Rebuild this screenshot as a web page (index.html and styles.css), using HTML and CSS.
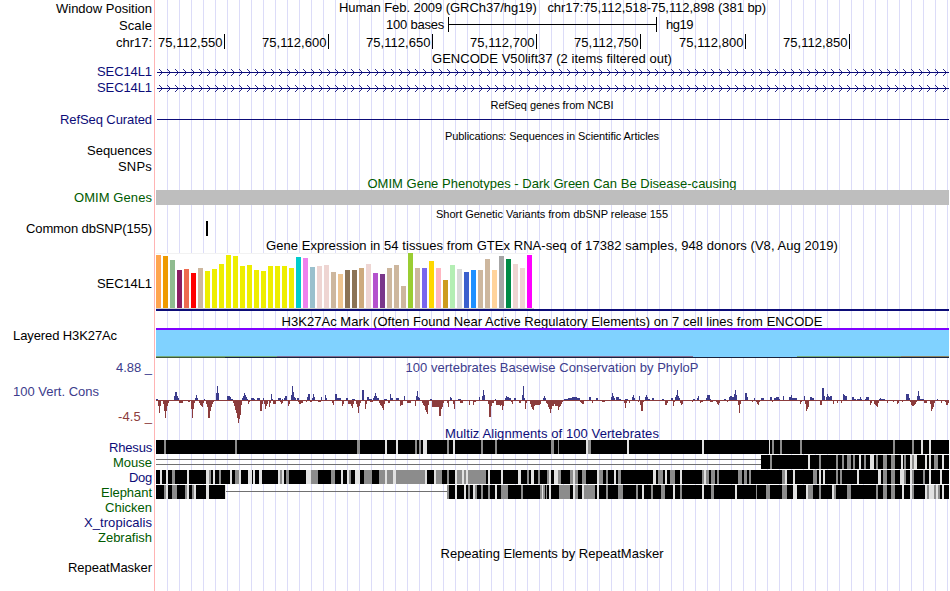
FILE: index.html
```html
<!DOCTYPE html>
<html lang="en">
<head>
<meta charset="utf-8">
<title>Genome Browser</title>
<link rel="stylesheet" href="styles.css">
</head>
<body>
<main class="browser">
  <section class="row position"><div class="label"><span data-width="96">Window Position</span></div><div class="title"><span data-width="427">Human Feb. 2009 (GRCh37/hg19) &nbsp; chr17:75,112,518-75,112,898 (381 bp)</span></div></section>
  <section class="row scale"><div class="label"><span data-width="33">Scale</span></div><div class="scalebar"><span data-width="58">100 bases</span><i class="ruler"></i><span data-width="27">hg19</span></div></section>
  <section class="row ticks"><div class="label"><span data-width="36">chr17:</span></div><div class="ticklist"><b><span data-width="64.5">75,112,550</span></b><b><span data-width="64.5">75,112,600</span></b><b><span data-width="64.5">75,112,650</span></b><b><span data-width="64.5">75,112,700</span></b><b><span data-width="64.5">75,112,750</span></b><b class="wide"><span data-width="64.5">75,112,800</span></b><b><span data-width="64.5">75,112,850</span></b></div></section>
  <section class="row heading gencode"><div class="title"><span data-width="240">GENCODE V50lift37 (2 items filtered out)</span></div></section>
  <section class="row gene navy"><div class="label"><span data-width="55">SEC14L1</span></div><svg class="track" data-kind="gene" viewBox="156 0 793 16"></svg></section>
  <section class="row gene navy"><div class="label"><span data-width="55">SEC14L1</span></div><svg class="track" data-kind="gene" viewBox="156 0 793 16"></svg></section>
  <section class="row heading small"><div class="title"><span data-width="123">RefSeq genes from NCBI</span></div></section>
  <section class="row item navy"><div class="label"><span data-width="92">RefSeq Curated</span></div><svg class="track" viewBox="156 0 793 15"><path fill="#0c0c78" d="M157 7h792v1H157z"/></svg></section>
  <section class="row heading small"><div class="title"><span data-width="214">Publications: Sequences in Scientific Articles</span></div></section>
  <section class="row gene"><div class="label"><span data-width="65">Sequences</span></div></section>
  <section class="row gene"><div class="label"><span data-width="34">SNPs</span></div></section>
  <section class="row heading omim green"><div class="title"><span data-width="369">OMIM Gene Phenotypes - Dark Green Can Be Disease-causing</span></div></section>
  <section class="row item green"><div class="label"><span data-width="78">OMIM Genes</span></div><div class="track graybar"></div></section>
  <section class="row heading small"><div class="title"><span data-width="232">Short Genetic Variants from dbSNP release 155</span></div></section>
  <section class="row item"><div class="label"><span data-width="126">Common dbSNP(155)</span></div><svg class="track" viewBox="156 0 793 15"><path d="M206 0h2v15h-2z"/></svg></section>
  <section class="row heading"><div class="title"><span data-width="572">Gene Expression in 54 tissues from GTEx RNA-seq of 17382 samples, 948 donors (V8, Aug 2019)</span></div></section>
  <section class="row gtex"><div class="label"><span data-width="55">SEC14L1</span></div><svg class="track" id="gtex" viewBox="156 252 793 60"></svg></section>
  <section class="row heading"><div class="title"><span data-width="541">H3K27Ac Mark (Often Found Near Active Regulatory Elements) on 7 cell lines from ENCODE</span></div></section>
  <section class="row acetyl"><div class="label left"><span data-width="104">Layered H3K27Ac</span></div><svg class="track" viewBox="156 328 793 30"><path fill="#80d2ff" d="M156 330h793v27H156z"/><path fill="#8000ff" d="M156 328h793v2H156z"/><path fill="#73aa79" d="M156 356h121v1H156zM797 356h104v1H797z"/><path fill="#806a90" d="M277 356h416v1H277z"/><path fill="#8b825e" d="M901 356h48v1h-48z"/><path fill="#17233f" d="M156 357h793v1H156z"/><path fill="#40583b" d="M156 357h69v1h-69z"/></svg></section>
  <section class="row heading cons"><div class="label"><span data-width="36">4.88 _</span></div><div class="title"><span data-width="293">100 vertebrates Basewise Conservation by PhyloP</span></div></section>
  <section class="row wiggle"><div class="label stack"><span class="name" data-width="86">100 Vert. Cons</span><span class="min" data-width="34">-4.5 _</span></div><svg class="track" id="wiggle" viewBox="156 375 793 50"></svg></section>
  <section class="row heading multiz navy"><div class="title"><span data-width="214">Multiz Alignments of 100 Vertebrates</span></div></section>
  <section class="row item navy"><div class="label"><span data-width="43">Rhesus</span></div><svg class="track" data-species="rhesus" viewBox="156 0 793 15"></svg></section>
  <section class="row item green"><div class="label"><span data-width="39">Mouse</span></div><svg class="track" data-species="mouse" viewBox="156 0 793 15"></svg></section>
  <section class="row item navy"><div class="label"><span data-width="23">Dog</span></div><svg class="track" data-species="dog" viewBox="156 0 793 15"></svg></section>
  <section class="row item green"><div class="label"><span data-width="51">Elephant</span></div><svg class="track" data-species="elephant" viewBox="156 0 793 15"></svg></section>
  <section class="row item green"><div class="label"><span data-width="47">Chicken</span></div></section>
  <section class="row item navy"><div class="label"><span data-width="68">X_tropicalis</span></div></section>
  <section class="row item green"><div class="label"><span data-width="54">Zebrafish</span></div></section>
  <section class="row heading masker"><div class="title"><span data-width="223">Repeating Elements by RepeatMasker</span></div></section>
  <section class="row item"><div class="label"><span data-width="84">RepeatMasker</span></div></section>
</main>
<script src="tracks.js"></script>
</body>
</html>
```
FILE: styles.css
```css
* { box-sizing: border-box; }
html, body { margin: 0; height: 591px; overflow: hidden; background: #fff; }
body { font-family: "Liberation Sans", Arial, sans-serif; font-size: 13px; color: #000; }
.browser {
  width: 949px;
  height: 591px;
  display: flex;
  flex-direction: column;
  background:
    linear-gradient(#ffb4b4, #ffb4b4) 154px 0 / 1px 100% no-repeat,
    repeating-linear-gradient(to right, #dcdcf8 0 1px, transparent 1px 12px) 167px 0 / 782px 100% no-repeat;
}
.row { display: grid; grid-template-columns: 152px 793px; grid-template-rows: 100%; column-gap: 4px; height: 15px; line-height: 15px; flex: none; white-space: nowrap; }
.row span { display: inline-block; white-space: nowrap; }
.label { grid-column: 1; text-align: right; }
.title { grid-column: 2; text-align: center; }
.track { grid-column: 2; display: block; width: 793px; height: 100%; shape-rendering: crispEdges; }
.heading { height: 16px; line-height: 19px; }
.heading .title { padding-right: 1px; }
.small { font-size: 11px; }
.navy { color: #0c0c78; }
.green { color: #005a00; }
.position { height: 17px; line-height: 16px; }
.position .label { line-height: 18px; }
.scale { height: 16px; line-height: 16px; }
.scale .label { line-height: 18px; }
.scalebar { display: flex; padding-left: 230px; }
.ruler { width: 209px; height: 15px; margin: 0 9px 0 4px; border: solid #000; border-width: 0 1px; background: linear-gradient(#000, #000) 0 7px / 100% 1px no-repeat; }
.ticks { height: 18px; line-height: 20px; }
.ticklist { display: flex; padding-top: 1px; }
.ticklist b { width: 104px; height: 15px; line-height: 18px; padding-right: 1.5px; border-right: 1px solid #000; font-weight: normal; text-align: right; }
.ticklist b:first-child { width: 69px; }
.ticklist .wide { width: 105px; }
.gencode { height: 13px; line-height: 15px; }
.gene { height: 16px; line-height: 16px; }
.omim { height: 15px; line-height: 17px; }
.graybar { background: #bebebe; }
.gtex { height: 60px; line-height: 63px; }
.acetyl { height: 30px; }
.left { text-align: left; padding-left: 13px; }
.cons { height: 17px; line-height: 19px; color: #3c3c8c; }
.wiggle { height: 50px; }
.stack { display: flex; flex-direction: column; padding-top: 9px; }
.name { color: #3c3c8c; align-self: flex-start; margin-left: 13px; }
.min { color: #8c3c3c; align-self: flex-end; margin-top: 10px; }
.multiz { height: 15px; line-height: 17px; }
.masker { height: 15px; line-height: 17px; }
```
FILE: tracks.js
```js
const NS = "http://www.w3.org/2000/svg";
function rect(svg, x, y, w, h, fill) {
  const r = document.createElementNS(NS, "rect");
  for (const [k, v] of Object.entries({ x, y, width: w, height: h, fill })) r.setAttribute(k, v);
  svg.appendChild(r);
}

document.querySelectorAll("[data-width]").forEach(el => {
  const gap = (el.dataset.width - el.getBoundingClientRect().width) / el.textContent.length;
  el.style.letterSpacing = gap.toFixed(3) + "px";
});

// Gene introns with strand arrows.
document.querySelectorAll('[data-kind="gene"]').forEach(svg => {
  rect(svg, 157, 8, 792, 1, "#0c0c78");
  for (let x = 162; x < 949; x += 8)
    for (let d = 1; d < 4; d++) {
      rect(svg, x - d, 8 - d, 1, 1, "#2a2a8c");
      rect(svg, x - d, 8 + d, 1, 1, "#2a2a8c");
    }
});

// GTEx expression bars.
const tops = [255,256,260,270,269,273,268,271,269,264,255,256,266,265,270,271,266,266,266,268,257,258,267,266,265,272,274,270,270,268,264,273,274,268,265,286,253,268,268,261,268,280,265,269,272,270,270,259,270,256,259,264,268,255];
const colors = ["ffa54f","ee9a00","8fbc8f","8b1c62","ee6a50","ff0000","cdb79e",...Array(13).fill("eeee00"),"00cdcd","ee82ee","9ac0cd","eed5d2","eed5d2","cdb79e","eec591","8b7355","8b7355","cdaa7d","eed5d2","b452cd","7a378b","cdb79e","cdb79e","cdb79e","9acd32","cdb79e","7a67ee","ffd700","ffb6c1","cd9b1d","b4eeb4","d9d9d9","3a5fcd","1e90ff","cdb79e","cdb79e","ffd39b","a6a6a6","008b45","eed5d2","eed5d2","ff00ff"];
const gtex = document.getElementById("gtex");
rect(gtex, 156, 253, 378, 55, "#ffffff");
rect(gtex, 156, 253, 378, 1, "#f2f2f2");
rect(gtex, 156, 308, 378, 1, "#cccccc");
tops.forEach((y, i) => rect(gtex, 156 + i * 7, y, 5, 308 - y, "#" + colors[i]));
rect(gtex, 156, 309, 793, 2, "#0c0c78");

// PhyloP scores: x,width,height.
const up = "156,2,1 174,1,4 175,2,8 177,1,4 178,1,2 195,1,2 196,1,5 197,1,2 204,1,1 216,1,7 217,1,14 218,1,7 227,3,4 230,1,3 231,2,1 242,1,2 243,1,4 244,1,7 245,1,5 246,1,3 247,1,1 251,3,2 254,1,1 257,3,2 263,1,2 271,1,6 272,1,1 278,3,2 282,1,1 284,1,2 285,2,4 291,1,5 292,1,14 293,1,8 294,1,3 295,1,2 297,2,2 307,1,3 308,2,6 312,1,2 313,1,6 314,1,3 321,1,3 325,1,5 326,1,2 335,2,6 337,4,2 346,2,2 352,3,1 362,2,10 367,2,3 369,3,1 373,1,2 374,1,4 375,1,7 376,1,4 377,2,2 384,3,1 390,1,6 391,2,2 396,3,2 404,1,4 416,1,4 417,1,9 418,1,3 419,1,2 430,2,1 450,1,3 451,1,2 458,3,1 479,1,3 482,1,4 483,1,10 484,1,5 495,1,1 505,1,2 506,1,4 507,2,3 509,2,2 514,2,2 522,1,5 523,1,14 524,1,2 543,1,2 544,1,4 545,1,2 564,4,1 568,4,2 572,5,3 577,3,2 589,2,3 596,2,2 611,1,3 612,1,7 613,1,4 614,1,2 616,3,3 619,2,1 625,3,1 632,1,3 633,1,5 634,1,2 639,1,4 645,1,3 646,1,5 647,1,3 648,2,1 652,2,2 662,2,1 671,2,2 675,1,3 676,1,5 677,1,10 678,1,4 679,1,2 693,2,1 697,1,2 698,1,4 706,1,2 707,3,5 710,1,1 724,2,1 729,1,3 730,2,4 732,2,3 734,1,6 735,1,10 736,1,5 745,2,7 747,1,3 754,1,2 761,3,2 770,2,3 774,2,2 776,3,3 779,1,1 783,1,4 789,2,3 791,1,5 792,5,2 804,1,4 810,2,3 812,2,2 822,2,12 824,1,4 826,1,3 827,1,6 828,1,4 829,1,3 830,2,4 843,1,6 844,1,5 845,2,4 852,2,3 854,2,1 857,3,1 860,1,3 861,1,1 865,1,1 866,3,3 879,1,1 880,1,2 881,4,1 906,3,6 909,1,2 917,1,4 918,1,9 919,1,4 920,4,1 937,1,1";
const down = "158,1,5 159,1,12 160,1,5 163,1,3 164,1,10 165,1,17 166,1,10 167,1,5 168,1,2 179,4,2 188,2,1 191,1,8 192,1,17 193,1,8 194,1,2 199,1,2 200,1,4 201,1,5 202,1,6 203,1,2 206,1,3 207,1,6 208,2,17 210,1,10 211,1,6 212,1,3 213,1,1 233,1,2 234,1,5 235,1,9 236,1,12 237,1,17 238,1,22 239,1,18 240,1,14 241,1,4 248,1,3 249,1,1 260,2,10 262,1,3 264,1,3 265,1,8 266,1,5 267,1,3 269,1,6 270,1,2 273,3,3 280,1,1 281,1,3 282,1,2 288,1,5 289,1,3 298,1,1 299,2,3 301,2,2 306,1,1 310,2,1 318,3,1 332,1,2 333,1,4 342,1,5 343,1,3 348,3,3 351,1,5 352,1,7 353,1,3 356,1,3 357,1,6 358,1,12 359,1,5 360,1,2 365,1,8 366,1,3 370,3,1 379,1,2 380,1,4 381,1,5 382,1,7 383,1,9 384,1,3 388,2,2 400,1,5 401,2,4 407,4,2 415,1,5 422,1,2 423,1,4 424,1,5 425,1,9 426,1,11 427,1,13 428,1,4 432,7,6 439,2,15 441,1,8 442,1,6 443,1,2 447,1,2 448,1,6 453,1,3 454,1,8 460,3,2 469,1,4 473,1,4 474,2,1 488,1,3 489,2,16 491,1,5 492,2,2 496,4,4 500,1,5 501,1,4 502,1,9 503,1,5 511,1,1 512,1,3 519,2,2 525,1,8 526,1,2 530,1,3 531,1,6 532,1,8 533,1,9 534,1,5 535,5,4 540,1,3 546,1,2 547,1,3 548,1,6 549,1,8 550,1,12 551,1,8 552,2,5 554,1,3 555,2,5 557,1,5 558,1,9 559,1,6 560,1,5 561,1,3 562,1,1 580,1,1 581,1,2 582,2,3 592,1,2 602,3,1 624,1,2 625,1,7 626,1,2 629,1,2 638,1,1 640,1,4 641,2,10 643,1,1 665,2,4 667,1,2 673,1,5 674,1,1 680,1,2 681,1,4 682,1,3 692,1,1 700,1,2 701,2,1 710,3,1 716,1,1 717,1,3 718,1,4 719,1,2 727,1,1 738,1,4 739,1,12 740,1,3 752,1,1 756,1,1 757,1,3 758,1,4 759,1,1 772,1,1 800,1,3 801,1,1 805,1,3 806,1,10 807,1,8 808,1,6 820,1,4 821,1,4 833,1,3 837,1,2 841,1,2 870,1,4 871,1,2 874,1,3 875,1,4 876,1,5 877,1,6 878,1,2 887,1,2 893,1,1 897,1,3 898,1,2 902,1,1 910,1,1 911,1,4 912,1,5 913,1,5 914,1,4 915,1,3 916,1,1 924,3,2 930,1,3 931,1,10 932,1,8 933,1,6 934,1,2 941,1,2 945,1,1 946,2,4 948,1,2";
const wiggle = document.getElementById("wiggle");
rect(wiggle, 156, 400, 793, 1, "#8c3c3c");
up.split(" ").forEach(s => { const [x, w, h] = s.split(",").map(Number); rect(wiggle, x, 400 - h, w, h, "#3c3c8c"); });
down.split(" ").forEach(s => { const [x, w, h] = s.split(",").map(Number); rect(wiggle, x, 401, w, h, "#8c3c3c"); });

// Pairwise alignments: identity blocks, with g = weak and l = very weak, each x,width.
const species = {
  rhesus: { blocks: "156,793", g: "164,2 235,2 357,3 415,2 419,2 447,2 481,2 495,2 551,3 558,1 588,3 772,2 780,2 800,2 893,2 912,2", l: "385,2 396,2 423,4 453,2 586,2 627,2 702,2 769,1 921,2 929,2" },
  mouse: { lines: [[4, 156, 605], [9, 156, 605]], blocks: "761,188", g: "770,2 819,2 836,2 842,2 847,4 853,2 864,2 876,2 883,4 891,4 904,2 912,2 934,4", l: "808,2 859,2 870,4 901,2 910,2 914,3 925,2 929,2 942,2" },
  dog: { blocks: "156,793", g: "172,3 209,2 219,2 235,4 280,2 286,3 311,7 331,4 349,2 364,8 379,6 387,6 396,29 436,6 447,2 457,5 464,2 468,18 527,2 538,2 547,2 558,3 570,3 575,3 582,4 599,4 606,2 618,3 658,5 670,5 702,2 706,3 711,4 717,2 738,4 744,3 749,2 782,3 813,4 836,2 840,2 883,4 891,4 904,2 912,2 923,2", l: "160,2 166,2 187,2 206,3 213,2 230,2 239,2 248,4 253,2 259,3 278,2 282,2 306,5 341,2 347,2 355,5 385,2 393,3 425,2 434,2 455,2 462,2 466,2 488,2 501,2 518,3 531,3 549,2 554,4 573,2 597,2 614,2 653,3 665,2 680,2 704,2 785,2 793,2 819,2 823,2 857,2 878,3 900,4 910,2 929,2 940,2" },
  elephant: { lines: [[6, 226, 221]], blocks: "156,69 447,502", g: "164,2 172,5 185,2 192,2 447,2 468,2 475,2 481,2 488,2 501,7 521,2 540,2 543,2 546,1 559,11 575,3 584,11 606,2 618,5 636,2 651,2 661,4 680,2 711,3 756,1 766,4 782,5 808,5 819,2 834,2 847,4 876,2 883,4 891,4 912,2 927,2 934,2 938,2", l: "166,2 187,2 194,2 206,3 225,1 455,2 464,2 473,2 495,2 542,1 549,2 573,2 582,2 597,2 642,2 673,2 702,2 735,2 793,4 806,2 832,2 902,2 910,2 925,2 929,5 936,2 942,2" }
};
document.querySelectorAll("[data-species]").forEach(svg => {
  const s = species[svg.dataset.species];
  (s.lines || []).forEach(([y, x, w]) => rect(svg, x, y, w, 1, "#707070"));
  [["blocks", "#000000"], ["g", "#8c8c8c"], ["l", "#e1e1e1"]].forEach(([key, fill]) =>
    s[key].split(" ").forEach(p => { const [x, w] = p.split(",").map(Number); rect(svg, x, 0, w, 14, fill); }));
});
```
